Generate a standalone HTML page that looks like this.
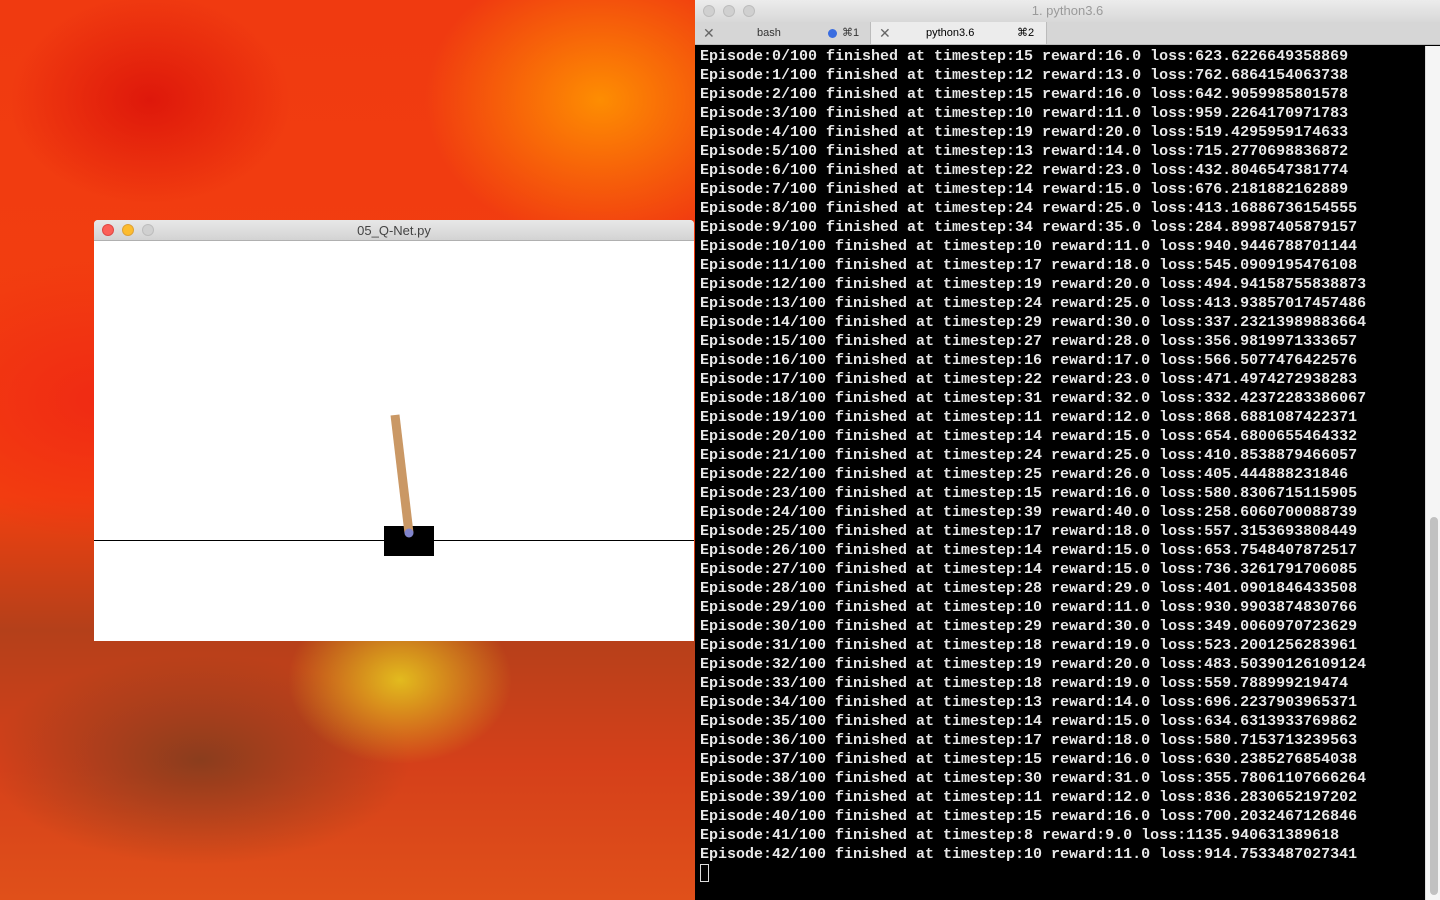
<!DOCTYPE html>
<html><head><style>
*{margin:0;padding:0;box-sizing:border-box}
body{width:1440px;height:900px;overflow:hidden;position:relative;font-family:"Liberation Sans",sans-serif;
background:
radial-gradient(ellipse 160px 120px at 400px 680px,rgba(230,200,30,.9),transparent 70%),
radial-gradient(ellipse 300px 150px at 200px 760px,rgba(120,60,30,.8),transparent 70%),
radial-gradient(ellipse 250px 200px at 600px 100px,rgba(255,150,0,.9),transparent 70%),
radial-gradient(ellipse 200px 150px at 150px 100px,rgba(220,20,10,.9),transparent 70%),
radial-gradient(ellipse 300px 200px at 100px 400px,rgba(240,40,20,.9),transparent 70%),
linear-gradient(180deg,#f03a10 0%,#f3400f 55%,#b4401a 70%,#d5401a 85%,#e0501a 100%);}
.term{position:absolute;left:695px;top:0;width:745px;height:900px;background:#000}
.tb{height:22px;background:linear-gradient(#ececec,#d8d8d8);text-align:center;font-size:13px;color:#9a9a9a;line-height:22px;position:relative}
.dot{position:absolute;top:5px;width:12px;height:12px;border-radius:50%;background:#d0d0d0;border:1px solid #bdbdbd}
.tabs{height:23px;background:#d6d6d6;display:flex;font-size:11px;line-height:23px;border-bottom:1px solid #bbb}
.tab{width:176px;position:relative;color:#333;border-right:1px solid #bbb}
.tab.a{background:#ececec;color:#000}
.lines{position:absolute;top:47px;left:5px;font-family:"Liberation Mono",monospace;font-weight:bold;font-size:15px;line-height:19px;color:#e8e8e8;white-space:pre}
.sb{position:absolute;left:730px;top:46px;width:15px;height:854px;background:#f5f5f5;border-left:1px solid #ddd}
.th{position:absolute;left:4px;top:471px;width:8px;height:378px;border-radius:4px;background:#c1c1c1}
.win{position:absolute;left:94px;top:220px;width:600px;height:421px;background:#fff;border-radius:4px 4px 0 0;overflow:hidden}
.wt{height:21px;background:linear-gradient(#e8e8e8,#d3d3d3);border-bottom:1px solid #b0b0b0;text-align:center;font-size:13px;line-height:21px;color:#444;position:relative}
</style></head><body>
<div class="win">
<div class="wt"><span class="dot" style="left:8px;top:4px;background:#fc5f57;border-color:#df4744"></span><span class="dot" style="left:28px;top:4px;background:#fdbc2e;border-color:#dea236"></span><span class="dot" style="left:48px;top:4px"></span>05_Q-Net.py</div>
<svg width="600" height="400" style="position:absolute;left:0;top:21px">
<line x1="0" y1="299.5" x2="600" y2="299.5" stroke="#000" stroke-width="1"/>
<rect x="290" y="285" width="50" height="30" fill="#000"/>
<line x1="301" y1="174" x2="315" y2="292" stroke="#ca9865" stroke-width="9"/>
<circle cx="315" cy="292" r="4.5" fill="#8184cb"/>
</svg>
</div>
<div class="term">
<div class="tb"><span class="dot" style="left:8px"></span><span class="dot" style="left:28px"></span><span class="dot" style="left:48px"></span>1. python3.6</div>
<div class="tabs"><div class="tab"><span style="position:absolute;left:8px;color:#666;font-size:14px">✕</span><span style="position:absolute;left:62px">bash</span><span style="position:absolute;left:133px;top:7px;width:9px;height:9px;border-radius:50%;background:#3a6de0"></span><span style="position:absolute;left:147px">⌘1</span></div><div class="tab a"><span style="position:absolute;left:8px;color:#666;font-size:14px">✕</span><span style="position:absolute;left:55px">python3.6</span><span style="position:absolute;left:146px">⌘2</span></div><div style="flex:1;background:#d6d6d6"></div></div>
<div class="lines">Episode:0/100 finished at timestep:15 reward:16.0 loss:623.6226649358869
Episode:1/100 finished at timestep:12 reward:13.0 loss:762.6864154063738
Episode:2/100 finished at timestep:15 reward:16.0 loss:642.9059985801578
Episode:3/100 finished at timestep:10 reward:11.0 loss:959.2264170971783
Episode:4/100 finished at timestep:19 reward:20.0 loss:519.4295959174633
Episode:5/100 finished at timestep:13 reward:14.0 loss:715.2770698836872
Episode:6/100 finished at timestep:22 reward:23.0 loss:432.8046547381774
Episode:7/100 finished at timestep:14 reward:15.0 loss:676.2181882162889
Episode:8/100 finished at timestep:24 reward:25.0 loss:413.16886736154555
Episode:9/100 finished at timestep:34 reward:35.0 loss:284.89987405879157
Episode:10/100 finished at timestep:10 reward:11.0 loss:940.9446788701144
Episode:11/100 finished at timestep:17 reward:18.0 loss:545.0909195476108
Episode:12/100 finished at timestep:19 reward:20.0 loss:494.94158755838873
Episode:13/100 finished at timestep:24 reward:25.0 loss:413.93857017457486
Episode:14/100 finished at timestep:29 reward:30.0 loss:337.23213989883664
Episode:15/100 finished at timestep:27 reward:28.0 loss:356.9819971333657
Episode:16/100 finished at timestep:16 reward:17.0 loss:566.5077476422576
Episode:17/100 finished at timestep:22 reward:23.0 loss:471.4974272938283
Episode:18/100 finished at timestep:31 reward:32.0 loss:332.42372283386067
Episode:19/100 finished at timestep:11 reward:12.0 loss:868.6881087422371
Episode:20/100 finished at timestep:14 reward:15.0 loss:654.6800655464332
Episode:21/100 finished at timestep:24 reward:25.0 loss:410.8538879466057
Episode:22/100 finished at timestep:25 reward:26.0 loss:405.444888231846
Episode:23/100 finished at timestep:15 reward:16.0 loss:580.8306715115905
Episode:24/100 finished at timestep:39 reward:40.0 loss:258.6060700088739
Episode:25/100 finished at timestep:17 reward:18.0 loss:557.3153693808449
Episode:26/100 finished at timestep:14 reward:15.0 loss:653.7548407872517
Episode:27/100 finished at timestep:14 reward:15.0 loss:736.3261791706085
Episode:28/100 finished at timestep:28 reward:29.0 loss:401.0901846433508
Episode:29/100 finished at timestep:10 reward:11.0 loss:930.9903874830766
Episode:30/100 finished at timestep:29 reward:30.0 loss:349.0060970723629
Episode:31/100 finished at timestep:18 reward:19.0 loss:523.2001256283961
Episode:32/100 finished at timestep:19 reward:20.0 loss:483.50390126109124
Episode:33/100 finished at timestep:18 reward:19.0 loss:559.788999219474
Episode:34/100 finished at timestep:13 reward:14.0 loss:696.2237903965371
Episode:35/100 finished at timestep:14 reward:15.0 loss:634.6313933769862
Episode:36/100 finished at timestep:17 reward:18.0 loss:580.7153713239563
Episode:37/100 finished at timestep:15 reward:16.0 loss:630.2385276854038
Episode:38/100 finished at timestep:30 reward:31.0 loss:355.78061107666264
Episode:39/100 finished at timestep:11 reward:12.0 loss:836.2830652197202
Episode:40/100 finished at timestep:15 reward:16.0 loss:700.2032467126846
Episode:41/100 finished at timestep:8 reward:9.0 loss:1135.940631389618
Episode:42/100 finished at timestep:10 reward:11.0 loss:914.7533487027341
<span style="display:inline-block;width:9px;height:18px;border:1px solid #ddd;vertical-align:-4px"></span></div>
<div class="sb"><div class="th"></div></div>
</div>
</body></html>
